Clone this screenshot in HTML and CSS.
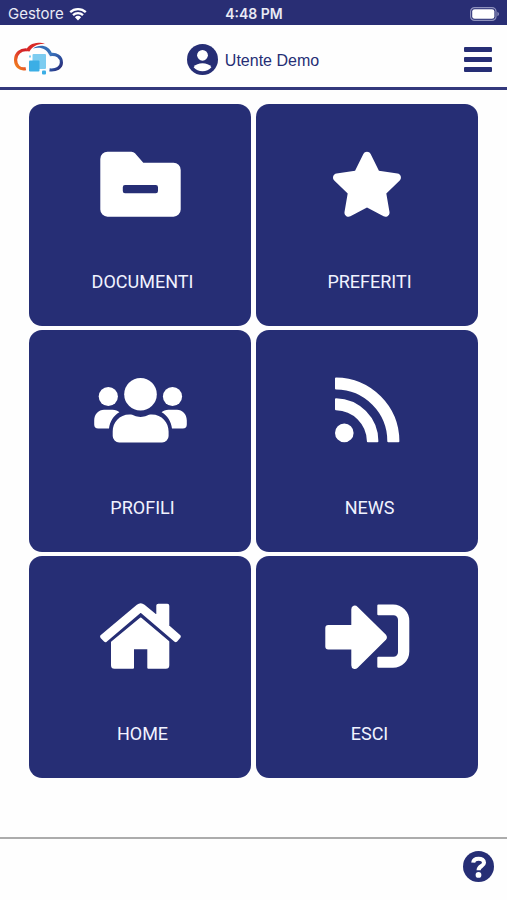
FILE: index.html
```html
<!DOCTYPE html>
<html lang="it">
<head>
  <meta charset="UTF-8" />
  <meta name="viewport" content="width=device-width, initial-scale=1.0"/>
  <title>Home - Utente Demo</title>
  <link rel="stylesheet" href="styles.css">
</head>
<body>

  <!-- Status bar -->
  <div class="statusbar">
    <div class="carrier">
      <span>Gestore</span>
      <svg class="wifi" viewBox="0 0 18 14">
        <path d="M1.2 5.2a11.2 11.2 0 0 1 15.6 0M4 8.2a7.2 7.2 0 0 1 10 0" fill="none" stroke="#fff" stroke-width="2.3"/>
        <path d="M9 13.4L5.9 10.2a4.5 4.5 0 0 1 6.2 0z" fill="#fff"/>
      </svg>
    </div>
    <span class="time">4:48 PM</span>
    <svg class="battery" viewBox="0 0 30 14">
      <rect x="0.6" y="0.6" width="25.4" height="12.8" rx="4" fill="none" stroke="#8f92bd" stroke-width="1.2"/>
      <rect x="2.2" y="2.2" width="22.2" height="9.6" rx="2.4" fill="#fff"/>
      <path d="M27.4 4.8c2.2 1 2.2 3.4 0 4.4z" fill="#8f92bd"/>
    </svg>
  </div>

  <!-- Header -->
  <header class="topbar">
    <a class="logo" href="#" aria-label="Home">
      <svg viewBox="0 0 50 34">
        <defs>
          <linearGradient id="warm" x1="0" y1="1" x2="0.7" y2="0">
            <stop offset="0" stop-color="#f28a1c"/>
            <stop offset="0.55" stop-color="#e4472a"/>
            <stop offset="1" stop-color="#d32027"/>
          </linearGradient>
          <linearGradient id="cool" x1="0" y1="0" x2="1" y2="1">
            <stop offset="0" stop-color="#3d78c0"/>
            <stop offset="0.6" stop-color="#2a4b9b"/>
            <stop offset="1" stop-color="#2b2670"/>
          </linearGradient>
        </defs>
        <path d="M11.8 26.6C5.6 28 1.4 23.6 1.6 17.6 1.8 11.4 6.6 7.4 12.6 7.8" fill="none" stroke="url(#warm)" stroke-width="3.2"/>
        <path d="M11.5 9C14 2.8 22-1.5 31.5 2.2 24 1.5 18.5 4.2 15.5 9.6z" fill="#d92a26"/>
        <path d="M19 6.5C25.5 1.5 35.5 3.5 38 11.5L35.2 13C32.5 6.5 26 4.5 19 6.5z" fill="#356db5"/>
        <path d="M35.5 12.6C42.5 11.2 47.6 15 47.4 20.8 47.2 25.6 42.6 28.6 35.5 27.9" fill="none" stroke="url(#cool)" stroke-width="3.2"/>
        <rect x="18.5" y="12" width="13.5" height="15" rx="1" fill="#7cccf0"/>
        <rect x="15" y="18.5" width="10.5" height="11" rx="1" fill="#3baee5"/>
        <rect x="28" y="28.5" width="4" height="4" rx="1" fill="#3baee5"/>
        <rect x="15" y="13.500" width="2" height="2" fill="#7cccf0"/>
      </svg>
    </a>

    <div class="user">
      <svg class="avatar" viewBox="0 0 31 31">
        <circle cx="15.5" cy="15.5" r="15.5" fill="#262e75"/>
        <circle cx="15.5" cy="11.3" r="5.4" fill="#fff"/>
        <path d="M6.6 23.2C8.5 20.4 12 19.3 15.5 19.3s7 1.1 8.9 3.9C22.2 25.9 19 27.3 15.5 27.3S8.8 25.9 6.6 23.2z" fill="#fff"/>
      </svg>
      <span>Utente Demo</span>
    </div>

    <button class="hamburger" type="button" aria-label="Menu">
      <span></span>
      <span></span>
      <span></span>
    </button>
  </header>

  <!-- Menu tiles -->
  <main class="tiles">
    <a class="tile" href="#documenti">
      <svg viewBox="0 0 96 72">
        <path fill-rule="evenodd" d="M15.5 3.7H39.5Q41.500 3.700 43 5.300L51.300 14.700H81.500a7.200 7.200 0 0 1 7.200 7.200V61.500a7.200 7.200 0 0 1-7.200 7.200H15.500a7.200 7.200 0 0 1-7.200-7.200V10.900a7.200 7.200 0 0 1 7.200-7.200zM33 37a2.200 2.200 0 0 0-2.200 2.200V43a2.200 2.200 0 0 0 2.200 2.200H63.800a2.200 2.200 0 0 0 2.200-2.200V39.200a2.200 2.200 0 0 0-2.200-2.200z"/>
      </svg>
      <span>DOCUMENTI</span>
    </a>

    <a class="tile" href="#preferiti">
      <svg viewBox="-90 -29 756 567">
        <path d="M259.3 17.8L194 150.2 47.9 171.5c-26.2 3.8-36.7 36.1-17.7 54.6l105.7 103-25 145.5c-4.5 26.3 23.2 46 46.4 33.7L288 439.6l130.7 68.7c23.2 12.2 50.9-7.4 46.4-33.7l-25-145.5 105.7-103c19-18.5 8.5-50.8-17.7-54.6L382 150.2 316.7 17.8c-11.7-23.6-45.6-23.9-57.4 0z"/>
      </svg>
      <span>PREFERITI</span>
    </a>

    <a class="tile" href="#profili">
      <svg viewBox="0 0 96 72">
        <circle cx="48.5" cy="20.3" r="16.3"/>
        <circle cx="16.3" cy="22.5" r="9.6"/>
        <circle cx="80.5" cy="22.5" r="9.6"/>
        <path d="M37.5 40.5C41.5 40.5 43.5 42.9 48.6 42.9S55.7 40.5 59.7 40.5C70 40.5 76.6 48.5 76.6 57.5V62a6.5 6.5 0 0 1-6.5 6.5H27.2A6.5 6.5 0 0 1 20.7 62V57.5C20.7 48.5 27.2 40.5 37.5 40.5z"/>
        <path d="M2.2 50.5V46.5C2.2 40.2 6.8 35.8 12 35.8H20.5C23.5 35.8 25.8 36.8 27.4 38.3 21.5 41.6 17.8 47.6 17 54.5H6.2A4 4 0 0 1 2.2 50.5z"/>
        <path d="M94.8 50.5V46.5C94.8 40.2 90.2 35.8 85 35.8H76.5C73.5 35.8 71.2 36.8 69.6 38.3 75.5 41.6 79.2 47.6 80 54.5H90.8A4 4 0 0 0 94.8 50.5z"/>
      </svg>
      <span>PROFILI</span>
    </a>

    <a class="tile" href="#news">
      <svg class="rounded" viewBox="0 0 96 72">
        <circle cx="25.3" cy="58.9" r="8.3"/>
        <path d="M17 25.2A42.3 42.3 0 0 1 58.4 67.2H48.9A32.5 32.5 0 0 0 17 35.2z"/>
        <path d="M17 4.5A63 63 0 0 1 79.4 67.2H69.3A52.5 52.5 0 0 0 17 14.5z"/>
      </svg>
      <span>NEWS</span>
    </a>

    <a class="tile" href="#home">
      <svg class="rounded" viewBox="0 0 96 72">
        <path d="M9.2 36L45.5 5.6Q48.7 3 51.9 5.6L65.3 16.6V5.5Q65.3 4.7 66.3 4.7H75.3Q76.3 4.7 76.3 5.7V26L87.7 36Q88 36.6 87.6 37.2L84.2 41Q83.7 41.3 83.2 41L48.7 11.6 14 41Q13.4 41.3 13 41L9.3 37.2Q8.9 36.6 9.2 36z"/>
        <path d="M48.7 18.6L76.3 41.8V65.2Q76.3 67.7 73.8 67.7H56.3V48.3H41V67.7H22.5Q20 67.7 20 65.2V42.3z"/>
      </svg>
      <span>HOME</span>
    </a>

    <a class="tile" href="#esci">
      <svg class="rounded" viewBox="0 0 96 72">
        <path d="M9.3 26H33.3V9.3C33.3 6.6 36 5.7 38 7.7L66 35.2Q67.8 37.3 66 39.4L38 67C36 69 33.3 68 33.3 65.3V48.5H9.3Q7.3 48.5 7.3 46.5V28Q7.3 26 9.3 26z"/>
        <path d="M59.3 5.5H74A15.3 15.3 0 0 1 89.3 20.8V51.4A15.3 15.3 0 0 1 74 66.7H59.3V57.7H74.5A5.5 5.5 0 0 0 80 52.2V19.8A5.5 5.5 0 0 0 74.5 14.3H59.3z"/>
      </svg>
      <span>ESCI</span>
    </a>
  </main>

  <!-- Footer -->
  <footer>
    <button class="help" type="button" aria-label="Aiuto">
      <svg viewBox="0 0 31 31">
        <circle cx="15.5" cy="15.5" r="15.5" fill="#262e75"/>
        <path d="M10.2 11.6C10.5 8.8 12.7 7.7 15.6 7.7 18.6 7.7 21 9.2 21 11.8 21 15.2 15.6 15 15.6 19.2" fill="none" stroke="#fff" stroke-width="4.1"/>
        <circle cx="15.5" cy="23.9" r="2.9" fill="#fff"/>
      </svg>
    </button>
  </footer>

</body>
</html>
```
FILE: styles.css
```css
/* Base styles */
* {
  margin: 0;
  padding: 0;
  box-sizing: border-box;
}

body {
  background-color: #fefefe;
  font-family: 'Liberation Sans', Arial, sans-serif;
  display: flex;
  flex-direction: column;
  min-height: 100vh;
  color: #262e75;
}

svg {
  display: block;
}

button {
  background: none;
  border: none;
  cursor: pointer;
}

/* Status bar */
.statusbar {
  background-color: #292e74;
  color: #e9eaf5;
  height: 25px;
  padding: 2px 7px 0 8px;
  display: grid;
  grid-template-columns: 1fr auto 1fr;
  align-items: center;
  font-family: Inter, sans-serif;
  font-size: 14px;
}

.carrier {
  display: flex;
  align-items: center;
  gap: 5px;
  font-size: 15px;
}

.wifi {
  width: 18px;
  height: 14px;
}

.time {
  font-weight: 600;
}

.battery {
  width: 30px;
  height: 14px;
  justify-self: end;
}

/* Header */
.topbar {
  height: 65px;
  padding: 6px 15px 0 14px;
  border-bottom: 3px solid #33387c;
  display: grid;
  grid-template-columns: 1fr auto 1fr;
  align-items: center;
}

.logo svg {
  width: 50px;
  height: 34px;
}

.user {
  display: flex;
  align-items: center;
  gap: 7px;
  font-size: 16px;
}

.user span {
  padding-top: 3px;
}

.avatar {
  width: 31px;
  height: 31px;
}

.hamburger {
  justify-self: end;
  display: flex;
  flex-direction: column;
  gap: 5px;
  width: 28px;
}

.hamburger span {
  height: 5px;
  border-radius: 1px;
  background-color: #262e75;
}

/* Menu tiles */
.tiles {
  padding: 14px 29px;
  display: grid;
  grid-template-columns: 1fr 1fr;
  gap: 4px 5px;
}

.tile {
  aspect-ratio: 1;
  padding-top: 44px;
  border-radius: 13px;
  background-color: #262e75;
  color: #f1f3ff;
  display: flex;
  flex-direction: column;
  align-items: center;
  gap: 50px;
  font-family: Roboto, sans-serif;
  font-size: 18px;
  line-height: 24px;
  text-decoration: none;
}

.tile span {
  padding-left: 5px;
}

.tile svg {
  width: 96px;
  height: 72px;
  fill: #fff;
}

/* softens the corners of the icon shapes */
.tile .rounded {
  stroke: #fff;
  stroke-width: 2px;
  stroke-linejoin: round;
}

/* Footer */
footer {
  margin-top: auto;
  height: 63px;
  padding: 12px 13px;
  border-top: 2px solid #acacac;
  display: flex;
  justify-content: flex-end;
  align-items: flex-start;
}

.help svg {
  width: 31px;
  height: 31px;
}
```
